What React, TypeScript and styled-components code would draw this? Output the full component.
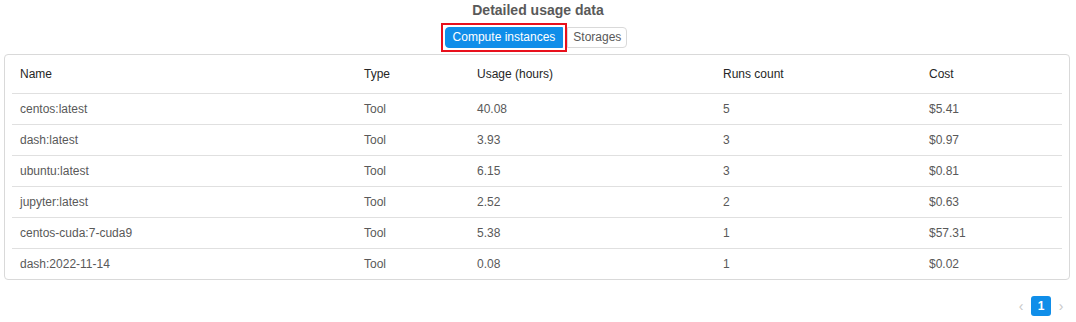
import styled, { createGlobalStyle } from 'styled-components'

const rows = [
  { name: 'centos:latest', type: 'Tool', usage: '40.08', runs: 5, cost: '$5.41' },
  { name: 'dash:latest', type: 'Tool', usage: '3.93', runs: 3, cost: '$0.97' },
  { name: 'ubuntu:latest', type: 'Tool', usage: '6.15', runs: 3, cost: '$0.81' },
  { name: 'jupyter:latest', type: 'Tool', usage: '2.52', runs: 2, cost: '$0.63' },
  { name: 'centos-cuda:7-cuda9', type: 'Tool', usage: '5.38', runs: 1, cost: '$57.31' },
  { name: 'dash:2022-11-14', type: 'Tool', usage: '0.08', runs: 1, cost: '$0.02' },
]

const columns = [
  { title: 'Name', width: 344 },
  { title: 'Type', width: 113 },
  { title: 'Usage (hours)', width: 246 },
  { title: 'Runs count', width: 206 },
  { title: 'Cost', width: 141 },
]

const App = () => {
  return (
    <>
      <GlobalStyle />
      <Page>
        <Title>Detailed usage data</Title>
        <ButtonRow>
          <Highlight>
            <TabButton $active>Compute instances</TabButton>
          </Highlight>
          <TabButton>Storages</TabButton>
        </ButtonRow>
        <Card>
          <Table>
            <colgroup>
              {columns.map((c) => (
                <col key={c.title} style={{ width: c.width }} />
              ))}
            </colgroup>
            <thead>
              <tr>
                {columns.map((c) => (
                  <Th key={c.title}>{c.title}</Th>
                ))}
              </tr>
            </thead>
            <tbody>
              {rows.map((r) => (
                <Row key={r.name}>
                  <Td>{r.name}</Td>
                  <Td>{r.type}</Td>
                  <Td>{r.usage}</Td>
                  <Td>{r.runs}</Td>
                  <Td>{r.cost}</Td>
                </Row>
              ))}
            </tbody>
          </Table>
        </Card>
        <Pagination>
          <Arrow>‹</Arrow>
          <PageItem $active>1</PageItem>
          <Arrow>›</Arrow>
        </Pagination>
      </Page>
    </>
  )
}

const GlobalStyle = createGlobalStyle`
  body {
    margin: 0;
    font-family: "Liberation Sans", Arial, sans-serif;
    font-size: 12px;
    color: #595959;
    background: #fff;
  }
`

const Page = styled.div`
  padding: 2px 6px 0 4px;
  display: flex;
  flex-direction: column;
`

const Title = styled.div`
  text-align: center;
  font-size: 14px;
  font-weight: bold;
  color: #595959;
  line-height: 17px;
  margin-left: 2px;
`

const ButtonRow = styled.div`
  display: flex;
  justify-content: center;
  align-items: center;
  margin-top: 4px;
  margin-left: -6px;
`

const Highlight = styled.div`
  border: 2px solid #e8101c;
  padding: 2px;
  display: flex;
`

const TabButton = styled.button<{ $active?: boolean }>`
  font-family: inherit;
  font-size: 12px;
  height: 21px;
  line-height: 19px;
  padding: 0 ${(p) => (p.$active ? '7px' : '5px')};
  margin: 0;
  cursor: pointer;
  color: ${(p) => (p.$active ? '#fff' : '#595959')};
  background: ${(p) => (p.$active ? '#108ee9' : '#fff')};
  border: 1px solid ${(p) => (p.$active ? '#108ee9' : '#d9d9d9')};
  border-radius: ${(p) => (p.$active ? '4px 0 0 4px' : '0 4px 4px 0')};
`

const Card = styled.div`
  margin-top: 2px;
  border: 1px solid #d9d9d9;
  border-radius: 4px;
  padding: 0 7px;
`

const Table = styled.table`
  width: 100%;
  border-collapse: collapse;
  table-layout: fixed;
`

const Th = styled.th`
  text-align: left;
  font-weight: normal;
  color: #262626;
  height: 38px;
  padding: 0 8px;
  border-bottom: 1px solid #e0e0e0;
`

const Row = styled.tr`
  &:not(:last-child) td {
    border-bottom: 1px solid #e0e0e0;
  }
`

const Td = styled.td`
  height: 30px;
  padding: 0 8px;
`

const Pagination = styled.div`
  display: flex;
  justify-content: flex-end;
  align-items: center;
  gap: 4px;
  margin-top: 16px;
  margin-right: 3px;
`

const Arrow = styled.span`
  color: #c8c8c8;
  font-size: 14px;
  width: 12px;
  text-align: center;
`

const PageItem = styled.span<{ $active?: boolean }>`
  display: inline-flex;
  align-items: center;
  justify-content: center;
  width: 20px;
  height: 20px;
  border-radius: 3px;
  font-weight: bold;
  color: ${(p) => (p.$active ? '#fff' : '#595959')};
  background: ${(p) => (p.$active ? '#108ee9' : '#fff')};
`

export default App
